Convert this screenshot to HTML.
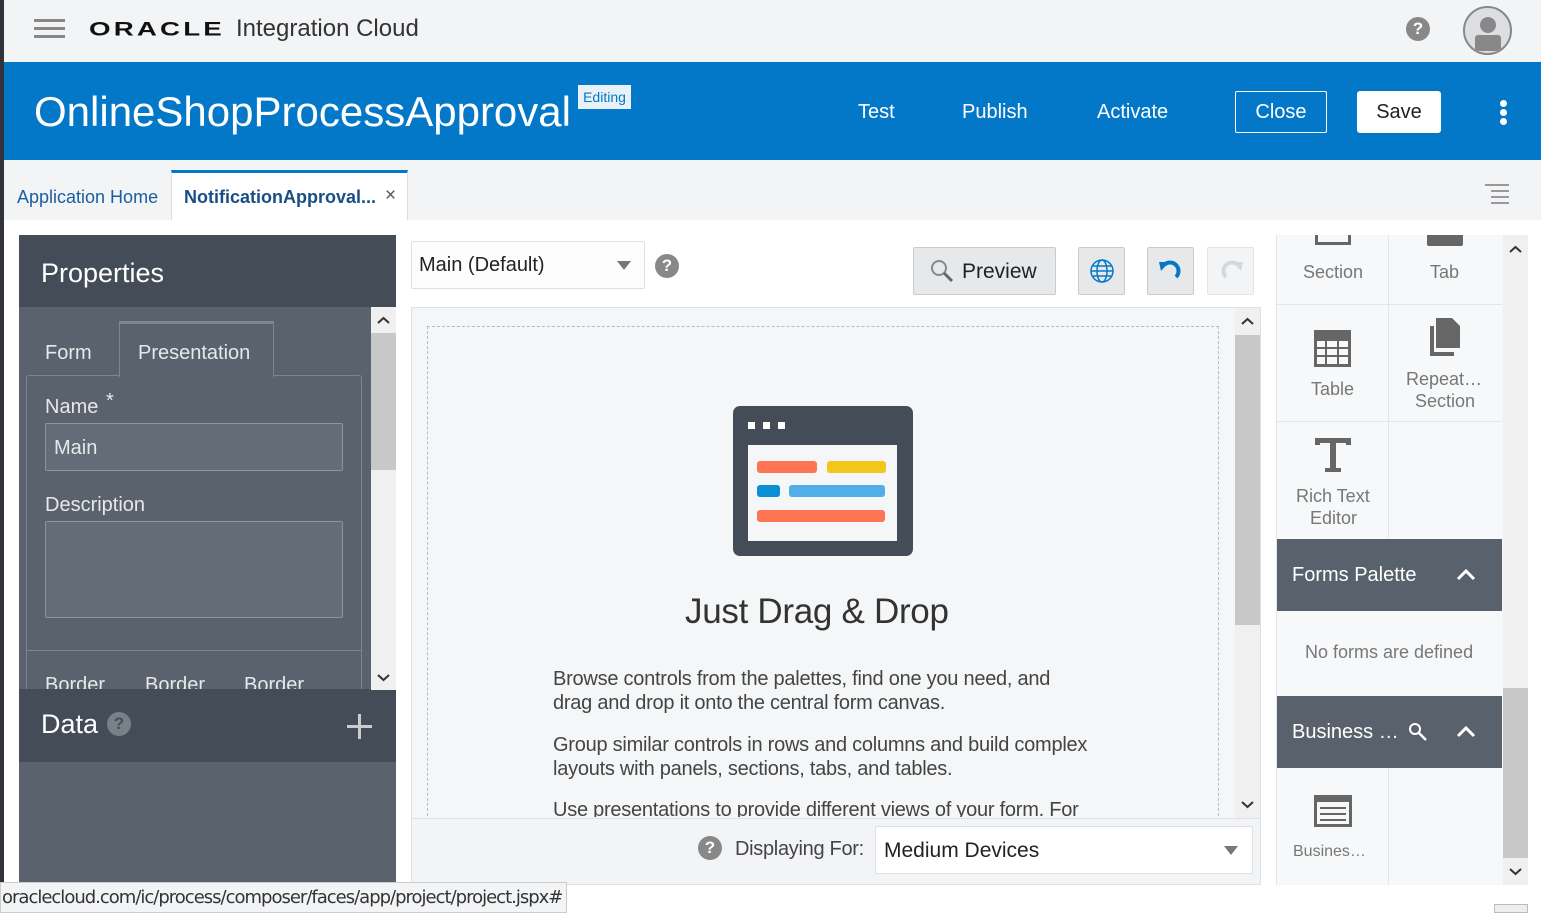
<!DOCTYPE html>
<html><head><meta charset="utf-8"><style>
*{box-sizing:border-box;margin:0;padding:0}
body{width:1541px;height:913px;position:relative;overflow:hidden;background:#fff;font-family:"Liberation Sans",sans-serif}
.a{position:absolute}
.t{white-space:nowrap}
</style></head><body>
<!-- top bar -->
<div class="a" style="left:0;top:0;width:1541px;height:62px;background:#f3f4f6"></div>
<div class="a" style="left:0;top:0;width:4px;height:913px;background:#30343a"></div>
<div class="a" style="left:34px;top:19px;width:31px;height:3px;background:#888"></div>
<div class="a" style="left:34px;top:27px;width:31px;height:3px;background:#888"></div>
<div class="a" style="left:34px;top:35px;width:31px;height:3px;background:#888"></div>
<div class="a t" style="left:89px;top:16px;font-size:22px;font-weight:bold;letter-spacing:2.5px;color:#111;transform-origin:0 50%;transform:scale(1.26,0.9)">ORACLE</div>
<div class="a t" style="left:236px;top:15px;font-size:24px;color:#333">Integration Cloud</div>
<div class="a" style="left:1406px;top:17px;width:24px;height:24px;border-radius:50%;background:#888;color:#fff;font-weight:bold;font-size:17px;text-align:center;line-height:24px">?</div>
<div class="a" style="left:1463px;top:6px;width:49px;height:49px;border-radius:50%;border:2px solid #888;background:#dcdee1;overflow:hidden">
<div class="a" style="left:15px;top:9px;width:16px;height:16px;border-radius:50%;background:#888"></div>
<div class="a" style="left:10px;top:27px;width:26px;height:16px;background:#888;border-radius:3px 3px 0 0"></div>
</div>
<!-- blue bar -->
<div class="a" style="left:4px;top:62px;width:1537px;height:98px;background:#0478c8"></div>
<div class="a t" style="left:34px;top:88px;font-size:42px;color:#fff;letter-spacing:0px">OnlineShopProcessApproval</div>
<div class="a t" style="left:578px;top:85px;width:53px;height:24px;background:#e8f0f8;color:#0478c8;font-size:14px;text-align:center;line-height:24px">Editing</div>
<div class="a t" style="left:858px;top:101px;font-size:20px;color:#fff">Test</div>
<div class="a t" style="left:962px;top:101px;font-size:20px;color:#fff">Publish</div>
<div class="a t" style="left:1097px;top:101px;font-size:20px;color:#fff">Activate</div>
<div class="a t" style="left:1235px;top:91px;width:92px;height:42px;border:1px solid #fff;border-radius:2px;color:#fff;font-size:20px;text-align:center;line-height:40px">Close</div>
<div class="a t" style="left:1357px;top:91px;width:84px;height:42px;background:#fff;border-radius:3px;color:#222;font-size:20px;text-align:center;line-height:42px">Save</div>
<div class="a" style="left:1500px;top:100px;width:7px;height:7px;border-radius:50%;background:#fff"></div>
<div class="a" style="left:1500px;top:109px;width:7px;height:7px;border-radius:50%;background:#fff"></div>
<div class="a" style="left:1500px;top:118px;width:7px;height:7px;border-radius:50%;background:#fff"></div>
<!-- tabs -->
<div class="a" style="left:4px;top:160px;width:1537px;height:60px;background:#f3f4f6"></div>
<div class="a t" style="left:17px;top:187px;font-size:18px;color:#1a5ea0">Application Home</div>
<div class="a" style="left:171px;top:170px;width:237px;height:50px;background:#fff;border-top:3px solid #0478c8;border-left:1px solid #ddd;border-right:1px solid #ddd"></div>
<div class="a t" style="left:184px;top:187px;font-size:18px;font-weight:bold;color:#1a4d88">NotificationApproval...</div>
<div class="a t" style="left:385px;top:185px;font-size:19px;color:#555">×</div>
<div class="a" style="left:1485px;top:184px;width:24px;height:2px;background:#999"></div>
<div class="a" style="left:1491px;top:190px;width:18px;height:2px;background:#999"></div>
<div class="a" style="left:1491px;top:196px;width:18px;height:2px;background:#999"></div>
<div class="a" style="left:1491px;top:202px;width:18px;height:2px;background:#999"></div>
<!-- properties -->
<div class="a" style="left:19px;top:235px;width:377px;height:650px;background:#5a636d"></div>
<div class="a" style="left:19px;top:235px;width:377px;height:72px;background:#444d57"></div>
<div class="a t" style="left:41px;top:258px;font-size:27px;color:#fff">Properties</div>
<div class="a t" style="left:45px;top:342px;font-size:20px;color:#e6e8ea">Form</div>
<div class="a" style="left:26px;top:375px;width:336px;height:320px;border:1px solid #7d858e;border-radius:3px"></div>
<div class="a" style="left:119px;top:321px;width:155px;height:56px;background:#5a636d;border:1px solid #7d858e;border-top:3px solid #7d858e;border-bottom:none"></div>
<div class="a t" style="left:138px;top:342px;font-size:20px;color:#e6e8ea">Presentation</div>
<div class="a t" style="left:45px;top:396px;font-size:20px;color:#e6e8ea">Name</div>
<div class="a t" style="left:106px;top:390px;font-size:20px;color:#e6e8ea">*</div>
<div class="a" style="left:45px;top:423px;width:298px;height:48px;background:#636c77;border:1px solid #8d949c;border-radius:2px"></div>
<div class="a t" style="left:54px;top:437px;font-size:20px;color:#e6e8ea">Main</div>
<div class="a t" style="left:45px;top:494px;font-size:20px;color:#e6e8ea">Description</div>
<div class="a" style="left:45px;top:521px;width:298px;height:97px;background:#636c77;border:1px solid #8d949c;border-radius:2px"></div>
<div class="a" style="left:27px;top:650px;width:334px;height:1px;background:#7d858e"></div>
<div class="a t" style="left:45px;top:674px;font-size:20px;color:#e6e8ea">Border</div>
<div class="a t" style="left:145px;top:674px;font-size:20px;color:#e6e8ea">Border</div>
<div class="a t" style="left:244px;top:674px;font-size:20px;color:#e6e8ea">Border</div>
<div class="a" style="left:19px;top:689px;width:352px;height:1px;background:#444d57"></div>
<div class="a" style="left:371px;top:307px;width:25px;height:383px;background:#f0f0f0"></div>
<div class="a" style="left:371px;top:333px;width:25px;height:137px;background:#c8c8c8"></div>
<svg class="a" style="left:377px;top:316px" width="13" height="9"><path d="M1 7L6.5 2L12 7" fill="none" stroke="#333" stroke-width="2"/></svg>
<svg class="a" style="left:377px;top:673px" width="13" height="9"><path d="M1 2L6.5 7L12 2" fill="none" stroke="#333" stroke-width="2"/></svg>
<div class="a" style="left:19px;top:690px;width:377px;height:72px;background:#444d57"></div>
<div class="a t" style="left:41px;top:709px;font-size:27px;color:#fff">Data</div>
<div class="a" style="left:107px;top:712px;width:24px;height:24px;border-radius:50%;background:#7a8088;color:#444d57;font-weight:bold;font-size:17px;text-align:center;line-height:24px">?</div>
<div class="a" style="left:347px;top:725px;width:25px;height:3px;background:#ccc"></div>
<div class="a" style="left:358px;top:714px;width:3px;height:25px;background:#ccc"></div>
<!-- center -->
<div class="a" style="left:411px;top:241px;width:234px;height:48px;border:1px solid #dde1e5;border-radius:2px;background:#fdfdfd"></div>
<div class="a t" style="left:419px;top:254px;font-size:20px;color:#222">Main (Default)</div>
<div class="a" style="left:617px;top:261px;border-left:7px solid transparent;border-right:7px solid transparent;border-top:9px solid #777"></div>
<div class="a" style="left:655px;top:254px;width:24px;height:24px;border-radius:50%;background:#888;color:#fff;font-weight:bold;font-size:17px;text-align:center;line-height:24px">?</div>
<div class="a" style="left:913px;top:247px;width:143px;height:48px;background:#e6e8ea;border:1px solid #c8ccd0;border-radius:2px"></div>
<svg class="a" style="left:928px;top:257px" width="28" height="28"><circle cx="11" cy="11" r="7" fill="none" stroke="#888" stroke-width="2"/><path d="M16 16L24 24" stroke="#666" stroke-width="3"/></svg>
<div class="a t" style="left:962px;top:260px;font-size:21px;color:#222">Preview</div>
<div class="a" style="left:1078px;top:247px;width:47px;height:48px;background:#e6e8ea;border:1px solid #c8ccd0;border-radius:2px"></div>
<svg class="a" style="left:1089px;top:258px" width="26" height="26"><g fill="none" stroke="#0478c8" stroke-width="1.5"><circle cx="13" cy="13" r="11"/><ellipse cx="13" cy="13" rx="5" ry="11"/><path d="M2 13H24M4 8H22M4 18H22"/></g></svg>
<div class="a" style="left:1147px;top:247px;width:47px;height:48px;background:#e6e8ea;border:1px solid #c8ccd0;border-radius:2px"></div>
<svg class="a" style="left:1158px;top:259px" width="26" height="24"><path d="M6 6 A8 8 0 1 1 18 18" fill="none" stroke="#0478c8" stroke-width="4"/><path d="M1 3L11 3L3 12Z" fill="#0478c8"/></svg>
<div class="a" style="left:1207px;top:247px;width:47px;height:48px;background:#f3f4f6;border:1px solid #e3e5e8;border-radius:2px"></div>
<svg class="a" style="left:1218px;top:259px" width="26" height="24"><path d="M20 6 A8 8 0 1 0 8 18" fill="none" stroke="#d5d8db" stroke-width="4"/><path d="M25 3L15 3L23 12Z" fill="#d5d8db"/></svg>
<div class="a" style="left:411px;top:307px;width:850px;height:578px;background:#f5f6f7;border:1px solid #dde1e5"></div>
<div class="a" style="left:427px;top:326px;width:792px;height:500px;border:1px dashed #bbb;border-bottom:none"></div>
<div class="a" style="left:1235px;top:308px;width:25px;height:510px;background:#f0f0f0"></div>
<div class="a" style="left:1235px;top:335px;width:25px;height:290px;background:#c8c8c8"></div>
<svg class="a" style="left:1241px;top:317px" width="13" height="9"><path d="M1 7L6.5 2L12 7" fill="none" stroke="#333" stroke-width="2"/></svg>
<svg class="a" style="left:1241px;top:800px" width="13" height="9"><path d="M1 2L6.5 7L12 2" fill="none" stroke="#333" stroke-width="2"/></svg>
<div class="a" style="left:733px;top:406px;width:180px;height:150px;background:#444d57;border-radius:7px"></div>
<div class="a" style="left:748px;top:422px;width:7px;height:7px;background:#fff"></div>
<div class="a" style="left:763px;top:422px;width:7px;height:7px;background:#fff"></div>
<div class="a" style="left:778px;top:422px;width:7px;height:7px;background:#fff"></div>
<div class="a" style="left:748px;top:445px;width:149px;height:96px;background:#f5f6f7"></div>
<div class="a" style="left:757px;top:461px;width:60px;height:12px;background:#ff7452;border-radius:3px"></div>
<div class="a" style="left:827px;top:461px;width:59px;height:12px;background:#f3c71a;border-radius:3px"></div>
<div class="a" style="left:757px;top:485px;width:23px;height:12px;background:#0a8fd5;border-radius:3px"></div>
<div class="a" style="left:789px;top:485px;width:96px;height:12px;background:#52aee8;border-radius:3px"></div>
<div class="a" style="left:757px;top:510px;width:128px;height:12px;background:#ff7452;border-radius:3px"></div>
<div class="a t" style="left:685px;top:592px;font-size:35px;color:#333;letter-spacing:-0.3px">Just Drag &amp; Drop</div>
<div class="a" style="left:553px;top:667px;width:520px;font-size:20px;line-height:24px;color:#444;letter-spacing:-0.25px">Browse controls from the palettes, find one you need, and drag and drop it onto the central form canvas.</div>
<div class="a" style="left:553px;top:733px;width:560px;font-size:20px;line-height:24px;color:#444;letter-spacing:-0.25px">Group similar controls in rows and columns and build complex layouts with panels, sections, tabs, and tables.</div>
<div class="a" style="left:412px;top:797px;width:822px;height:20px;overflow:hidden"><div class="a t" style="left:141px;top:2px;font-size:20px;color:#444;letter-spacing:-0.25px">Use presentations to provide different views of your form. For</div></div>
<div class="a" style="left:412px;top:818px;width:848px;height:66px;background:#f3f4f6;border-top:1px solid #dde1e5"></div>
<div class="a" style="left:698px;top:836px;width:24px;height:24px;border-radius:50%;background:#888;color:#fff;font-weight:bold;font-size:17px;text-align:center;line-height:24px">?</div>
<div class="a t" style="left:735px;top:838px;font-size:20px;color:#444;letter-spacing:-0.3px">Displaying For:</div>
<div class="a" style="left:875px;top:826px;width:378px;height:48px;background:#fff;border:1px solid #dde1e5"></div>
<div class="a t" style="left:884px;top:839px;font-size:21px;color:#222">Medium Devices</div>
<div class="a" style="left:1224px;top:846px;border-left:7px solid transparent;border-right:7px solid transparent;border-top:9px solid #777"></div>
<!-- right palette -->
<div class="a" style="left:1276px;top:235px;width:227px;height:650px;background:#f7f8f9;border-left:1px solid #e3e5e8"></div>
<div class="a" style="left:1388px;top:235px;width:1px;height:304px;background:#e3e5e8"></div>
<div class="a" style="left:1277px;top:304px;width:225px;height:1px;background:#e3e5e8"></div>
<div class="a" style="left:1277px;top:421px;width:225px;height:1px;background:#e3e5e8"></div>
<div class="a" style="left:1315px;top:235px;width:36px;height:10px;border:3px solid #666;border-top:none"></div>
<div class="a" style="left:1427px;top:235px;width:36px;height:11px;background:#666;border-radius:0 0 2px 2px"></div>
<div class="a t" style="left:1303px;top:262px;font-size:18px;color:#777">Section</div>
<div class="a t" style="left:1430px;top:262px;font-size:18px;color:#777">Tab</div>
<svg class="a" style="left:1314px;top:330px" width="38" height="38"><rect x="1.5" y="1.5" width="34" height="34" fill="none" stroke="#666" stroke-width="3"/><path d="M1 10H36M1 18H36M1 26H36M12 10V36M24 10V36" stroke="#666" stroke-width="2"/><rect x="1" y="1" width="35" height="9" fill="#666"/></svg>
<div class="a t" style="left:1311px;top:379px;font-size:18px;color:#777">Table</div>
<svg class="a" style="left:1428px;top:318px" width="34" height="38"><path d="M8 0H24L32 8V30H8Z" fill="#666"/><path d="M2 8H6V34H26V38H2Z" fill="#666"/></svg>
<div class="a t" style="left:1406px;top:369px;font-size:18px;color:#777">Repeat…</div>
<div class="a t" style="left:1415px;top:391px;font-size:18px;color:#777">Section</div>
<svg class="a" style="left:1313px;top:436px" width="40" height="38"><path d="M2 2H38V9H33V7H23V32H28V36H12V32H17V7H7V9H2Z" fill="#666"/></svg>
<div class="a t" style="left:1296px;top:486px;font-size:18px;color:#777">Rich Text</div>
<div class="a t" style="left:1310px;top:508px;font-size:18px;color:#777">Editor</div>
<div class="a" style="left:1277px;top:539px;width:225px;height:72px;background:#59626c"></div>
<div class="a t" style="left:1292px;top:564px;font-size:20px;color:#fff">Forms Palette</div>
<svg class="a" style="left:1456px;top:568px" width="20" height="14"><path d="M2 11L10 3L18 11" fill="none" stroke="#fff" stroke-width="3"/></svg>
<div class="a t" style="left:1305px;top:642px;font-size:18px;color:#777">No forms are defined</div>
<div class="a" style="left:1277px;top:696px;width:225px;height:72px;background:#59626c"></div>
<div class="a t" style="left:1292px;top:721px;font-size:20px;color:#fff">Business …</div>
<svg class="a" style="left:1408px;top:722px" width="20" height="20"><circle cx="7" cy="7" r="5" fill="none" stroke="#fff" stroke-width="2"/><path d="M11 11L18 18" stroke="#fff" stroke-width="2.5"/></svg>
<svg class="a" style="left:1456px;top:725px" width="20" height="14"><path d="M2 11L10 3L18 11" fill="none" stroke="#fff" stroke-width="3"/></svg>
<div class="a" style="left:1388px;top:768px;width:1px;height:117px;background:#e3e5e8"></div>
<svg class="a" style="left:1314px;top:795px" width="38" height="32"><rect x="1.5" y="1.5" width="35" height="29" fill="none" stroke="#666" stroke-width="3"/><rect x="1" y="1" width="36" height="6" fill="#666"/><path d="M6 13H32M6 19H32M6 25H32" stroke="#666" stroke-width="2"/></svg>
<div class="a t" style="left:1293px;top:843px;font-size:16px;color:#777">Busines…</div>
<div class="a" style="left:1503px;top:235px;width:25px;height:650px;background:#f0f0f0"></div>
<div class="a" style="left:1503px;top:688px;width:25px;height:170px;background:#c8c8c8"></div>
<svg class="a" style="left:1509px;top:245px" width="13" height="9"><path d="M1 7L6.5 2L12 7" fill="none" stroke="#333" stroke-width="2"/></svg>
<svg class="a" style="left:1509px;top:867px" width="13" height="9"><path d="M1 2L6.5 7L12 2" fill="none" stroke="#333" stroke-width="2"/></svg>
<!-- status -->
<div class="a" style="left:0;top:882px;width:567px;height:31px;background:#f3f4f6;border:1px solid #ccc"></div>
<div class="a t" style="left:2px;top:887px;font-size:18px;color:#333;font-family:'DejaVu Sans',sans-serif;letter-spacing:-1.0px">oraclecloud.com/ic/process/composer/faces/app/project/project.jspx#</div>
<div class="a" style="left:1494px;top:904px;width:34px;height:9px;background:#eee;border:1px solid #bbb"></div>
</body></html>
